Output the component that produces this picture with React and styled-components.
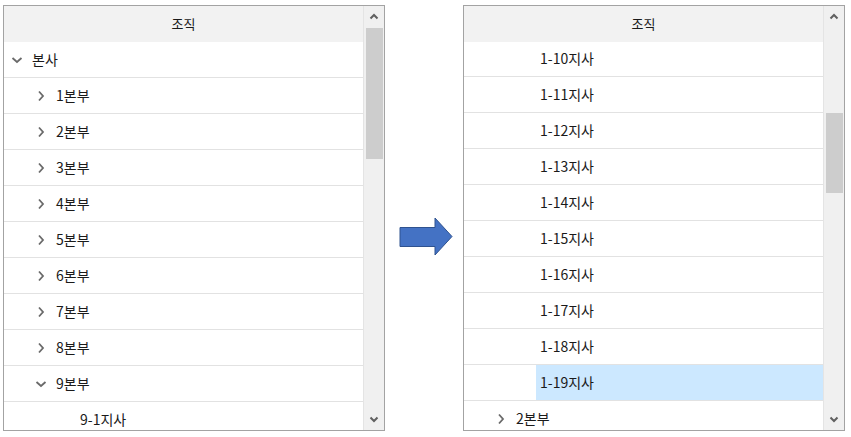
import React from "react";
import styled, { createGlobalStyle } from "styled-components";

const Global = createGlobalStyle`
  html, body { margin: 0; padding: 0; background: #ffffff; }
  body { font-family: "Noto Sans CJK KR", "Noto Sans", sans-serif; }
`;

const Page = styled.div`
  display: flex;
  align-items: flex-start;
  padding: 5px 0 0 3px;
`;

const Panel = styled.div`
  width: 382px;
  height: 426px;
  box-sizing: border-box;
  border: 1px solid #a3a3a3;
  display: flex;
  background: #fff;
  overflow: hidden;
`;

const ListArea = styled.div`
  flex: 1;
  display: flex;
  flex-direction: column;
  overflow: hidden;
`;

const Header = styled.div`
  height: 36px;
  flex: none;
  background: #f2f2f2;
  display: flex;
  align-items: center;
  justify-content: center;
  font-size: 13px;
  color: #1a1a1a;
  padding-bottom: 1px;
  box-sizing: border-box;
`;

const Rows = styled.div`
  flex: 1;
  overflow: hidden;
  margin-top: ${(p) => p.$shift || 0}px;
`;

const Row = styled.div`
  height: 36px;
  box-sizing: border-box;
  border-bottom: 1px solid #e2e2e2;
  display: flex;
  align-items: stretch;
  padding-left: ${(p) => p.$level * 24}px;
`;

const Toggle = styled.div`
  width: 24px;
  flex: none;
  display: flex;
  align-items: center;
  justify-content: center;
  color: #6a6a6a;
  padding-left: 1px;
  box-sizing: border-box;
`;

const Cell = styled.div`
  flex: 1;
  display: flex;
  align-items: center;
  padding-left: 4px;
  padding-bottom: 1px;
  font-size: 14px;
  color: #1a1a1a;
  background: ${(p) => (p.$selected ? "#cce8ff" : "transparent")};
`;

const ScrollBar = styled.div`
  width: 20px;
  flex: none;
  border-left: 1px solid #e4e4e4;
  background: #f0f0f0;
  display: flex;
  flex-direction: column;
`;

const ScrollButton = styled.div`
  height: 21px;
  flex: none;
  display: flex;
  align-items: center;
  justify-content: center;
  color: #606060;
`;

const Track = styled.div`
  flex: 1;
  position: relative;
`;

const Thumb = styled.div`
  position: absolute;
  left: 2px;
  right: 1px;
  background: #cdcdcd;
`;

const ArrowCell = styled.div`
  width: 78px;
  flex: none;
  padding-top: 212px;
  display: flex;
  justify-content: flex-start;
  padding-left: 13px;
  box-sizing: border-box;
`;

const ChevronDown = () => (
  <svg width="12" height="8" viewBox="0 0 12 8">
    <path d="M1.5 2 L6 6 L10.5 2" fill="none" stroke="currentColor" strokeWidth="1.8" />
  </svg>
);

const ChevronRight = () => (
  <svg width="8" height="12" viewBox="0 0 8 12">
    <path d="M2 1.5 L6 6 L2 10.5" fill="none" stroke="currentColor" strokeWidth="1.8" />
  </svg>
);

const ScrollUp = () => (
  <svg width="10" height="7" viewBox="0 0 10 7">
    <path d="M1.5 5.5 L5 2 L8.5 5.5" fill="none" stroke="currentColor" strokeWidth="2" />
  </svg>
);

const ScrollDown = () => (
  <svg width="10" height="7" viewBox="0 0 10 7">
    <path d="M1.5 1.5 L5 5 L8.5 1.5" fill="none" stroke="currentColor" strokeWidth="2" />
  </svg>
);

const Arrow = () => (
  <svg width="56" height="40" viewBox="0 0 56 40">
    <polygon
      points="2,10.5 37,10.5 37,1 54,19.5 37,38 37,29.5 2,29.5"
      fill="#4472c4"
      stroke="#2f528f"
      strokeWidth="1"
    />
  </svg>
);

const TreeRow = ({ label, level, state, selected }) => (
  <Row $level={level}>
    <Toggle>
      {state === "open" && <ChevronDown />}
      {state === "closed" && <ChevronRight />}
    </Toggle>
    <Cell $selected={selected}>{label}</Cell>
  </Row>
);

const TreePanel = ({ rows, thumbTop, thumbHeight, shift }) => (
  <Panel>
    <ListArea>
      <Header>조직</Header>
      <Rows $shift={shift}>
        {rows.map((r, i) => (
          <TreeRow key={i} {...r} />
        ))}
      </Rows>
    </ListArea>
    <ScrollBar>
      <ScrollButton>
        <ScrollUp />
      </ScrollButton>
      <Track>
        <Thumb style={{ top: thumbTop, height: thumbHeight }} />
      </Track>
      <ScrollButton>
        <ScrollDown />
      </ScrollButton>
    </ScrollBar>
  </Panel>
);

const leftRows = [
  { label: "본사", level: 0, state: "open" },
  ...[1, 2, 3, 4, 5, 6, 7, 8].map((n) => ({ label: `${n}본부`, level: 1, state: "closed" })),
  { label: "9본부", level: 1, state: "open" },
  { label: "9-1지사", level: 2, state: "leaf" },
];

const rightRows = [
  ...[10, 11, 12, 13, 14, 15, 16, 17, 18, 19].map((n) => ({
    label: `1-${n}지사`,
    level: 2,
    state: "leaf",
    selected: n === 19,
  })),
  { label: "2본부", level: 1, state: "closed" },
];

export default function App() {
  return (
    <>
      <Global />
      <Page>
        <TreePanel rows={leftRows} thumbTop={1} thumbHeight={131} shift={0} />
        <ArrowCell>
          <Arrow />
        </ArrowCell>
        <TreePanel rows={rightRows} thumbTop={86} thumbHeight={80} shift={-1} />
      </Page>
    </>
  );
}
